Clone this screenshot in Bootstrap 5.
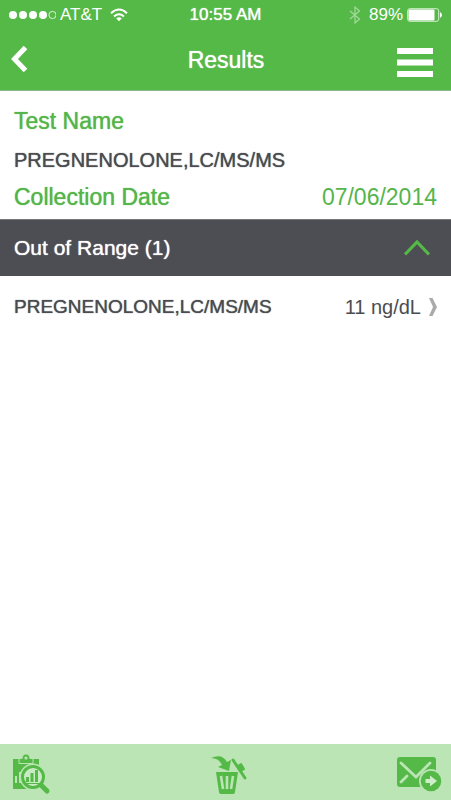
<!DOCTYPE html>
<html lang="en">
<head>
<meta charset="utf-8">
<meta name="viewport" content="width=device-width, initial-scale=1">
<title>Results</title>
<link rel="stylesheet" href="https://cdn.jsdelivr.net/npm/bootstrap@5.3.0/dist/css/bootstrap.min.css">
<style>
body{font-family:"Liberation Sans",Arial,sans-serif;color:#4b4c50;line-height:24px}
svg{display:block;flex:none}
.app-green{background:#55b947;color:#fff}
.medium{text-shadow:0 0 1px currentColor}
.status{height:30px;font-size:17px;padding:0 8px}
.status>*{flex:1 1 0}
.carrier{font-size:17px}
.title-bar{height:61px;padding:0 18px 0 11px;border-bottom:1px solid #8fb58a}
.title-bar>*{flex:1 1 0}
.plain{background:none;border:0;padding:0;color:inherit}
.heading{font-size:23px;line-height:28px;margin:0;font-weight:400}
.label-green{color:#55b54b}
.summary{padding:16px 14px 8px}
.test{font-size:20px;margin:13px 0 11px}
.band{background:#4d4e53;color:#fff;height:57px;padding:0 21px 0 14px;font-size:21px;border-top:1px solid #77787b}
.result{color:inherit;height:62px;padding:0 14px;font-size:19px}
.amount{font-size:20px}
.tools{background:#bce5b5;height:56px;padding:0 9px 0 12px}
.tools>*{flex:1 1 0}
</style>
<script src="https://cdn.jsdelivr.net/npm/bootstrap@5.3.0/dist/js/bootstrap.bundle.min.js" defer></script>
</head>
<body class="d-flex flex-column min-vh-100 bg-white">
<header class="app-green">
  <div class="status d-flex align-items-center">
    <div class="d-flex align-items-center">
      <svg width="48" height="10" viewBox="0 0 48 10" fill="#fff"><circle cx="5" cy="5" r="4"/><circle cx="15" cy="5" r="4"/><circle cx="25" cy="5" r="4"/><circle cx="35" cy="5" r="4"/><circle cx="44.5" cy="5" r="3.6" fill="none" stroke="#fff" stroke-width=".8"/></svg>
      <span class="carrier ms-1 me-2">AT&amp;T</span>
      <svg width="18" height="14" viewBox="0 0 18 14" fill="none" stroke="#fff" stroke-width="2"><path d="M1 5.2Q9-2.2 17 5.2M4 8.4Q9 4 14 8.4"/><path d="M6.2 10.4Q9 8 11.8 10.4L9 13.3Z" fill="#fff" stroke="none"/></svg>
    </div>
    <div class="text-center medium">10:55 AM</div>
    <div class="d-flex align-items-center justify-content-end">
      <svg class="me-2" width="12" height="18" viewBox="0 0 12 18" fill="none" stroke="#a4d99c" stroke-width="1.2"><path d="M1 5L10.5 13L6 17V1L10.5 5L1 13"/></svg>
      <span class="me-1">89%</span>
      <svg width="36" height="14" viewBox="0 0 36 14"><rect x=".7" y=".7" width="31" height="12.6" rx="2" fill="none" stroke="#d4f0cf"/><rect x="1.5" y="1.5" width="26" height="11" rx="1" fill="#fff"/><path d="M33 4Q37 7 33 10Z" fill="#fff"/></svg>
    </div>
  </div>
  <nav class="title-bar d-flex align-items-center" aria-label="Main">
    <div><button class="plain d-block" type="button" aria-label="Back"><svg width="17" height="28" viewBox="0 0 17 28" fill="none" stroke="#fff" stroke-width="5"><path d="M14.5 1.5L3.5 13L14.5 24.5"/></svg></button></div>
    <h1 class="heading medium text-center ps-2">Results</h1>
    <div class="d-flex justify-content-end"><button class="plain pt-1" type="button" aria-label="Menu"><svg width="36" height="29" fill="#fff"><path d="M0 0H36V6H0ZM0 11.5H36V17.5H0ZM0 23H36V29H0Z"/></svg></button></div>
  </nav>
</header>
<main class="flex-grow-1">
  <section class="summary">
    <h2 class="heading medium label-green">Test Name</h2>
    <p class="test medium">PREGNENOLONE,LC/MS/MS</p>
    <div class="d-flex justify-content-between label-green">
      <h2 class="heading medium">Collection Date</h2><span class="heading">07/06/2014</span>
    </div>
  </section>
  <button class="plain band w-100 d-flex align-items-center justify-content-between" type="button" aria-expanded="true">
    <span class="medium">Out of Range (1)</span>
    <svg width="26" height="19" viewBox="0 0 26 19" fill="none" stroke="#55b947" stroke-width="3.2"><path d="M1 15.5L13 3L25 15.5"/></svg>
  </button>
  <a href="#" class="result d-flex align-items-center text-decoration-none">
    <span class="medium me-auto">PREGNENOLONE,LC/MS/MS</span>
    <span class="amount me-2">11 ng/dL</span>
    <svg width="8" height="18" viewBox="0 0 8 18" fill="#aaa"><path d="M0 0H3.5L8 9L3.5 18H0L4 9Z"/></svg>
  </a>
</main>
<footer class="tools d-flex align-items-center">
  <div><button class="plain d-block pt-1" type="button" aria-label="View report">
    <svg width="40" height="42" viewBox="0 0 40 42" fill="#55b947"><path d="M1 6H27V36H1Z"/><path d="M7 10.5V5.5H10Q10.500 1 14 1T18 5.500H21V10.500Z" stroke="#bce5b5"/><circle cx="14" cy="5" r="1.600" fill="#bce5b5"/><path d="M3 23H5V30H3ZM7 19H9V30H7Z" fill="#bce5b5"/><circle cx="21" cy="24" r="13.500" fill="#bce5b5"/><circle cx="21" cy="24" r="10.500" fill="#c9ebc3" stroke="#55b947" stroke-width="3"/><path d="M29 32L35 38" stroke="#55b947" stroke-width="5" stroke-linecap="round"/><path d="M14 24H17V29H14ZM18.500 20H21.500V29H18.500ZM23 17H26V29H23ZM14 30H27V31H14Z"/></svg>
  </button></div>
  <div class="d-flex justify-content-center"><button class="plain pt-1" type="button" aria-label="Delete">
    <svg width="42" height="42" viewBox="0 0 42 42" fill="#55b947"><path d="M5 5Q16 0 21 9L25 7L23 18L12 14L16 12Q13 5 5 5Z"/><path d="M27 7L39 25" stroke="#55b947" stroke-width="3" stroke-linecap="round"/><path d="M32 13L35 11L38 16L35 18" stroke="#55b947" stroke-width="2" stroke-linejoin="round"/><path d="M10 19H32L29 39Q29 41 27 41H15Q13 41 13 39Z"/><path d="M15 23L17 36M21 23V36M27 23L25 36" stroke="#bce5b5" stroke-width="2.600"/></svg>
  </button></div>
  <div class="d-flex justify-content-end"><button class="plain pt-1" type="button" aria-label="Send by email">
    <svg width="46" height="38" viewBox="0 0 46 38"><rect x="1" y="2" width="39" height="30" rx="3" fill="#55b947"/><path d="M5 8L20 22L34 8M5 27L11 21" fill="none" stroke="#bce5b5" stroke-width="2.800" stroke-linecap="round"/><circle cx="35" cy="26" r="12" fill="#bce5b5"/><circle cx="35" cy="26" r="10.300" fill="#55b947"/><path d="M29.500 24H34V20.500L41 26L34 31.500V28H29.500Z" fill="#d0edca"/></svg>
  </button></div>
</footer>
</body>
</html>
